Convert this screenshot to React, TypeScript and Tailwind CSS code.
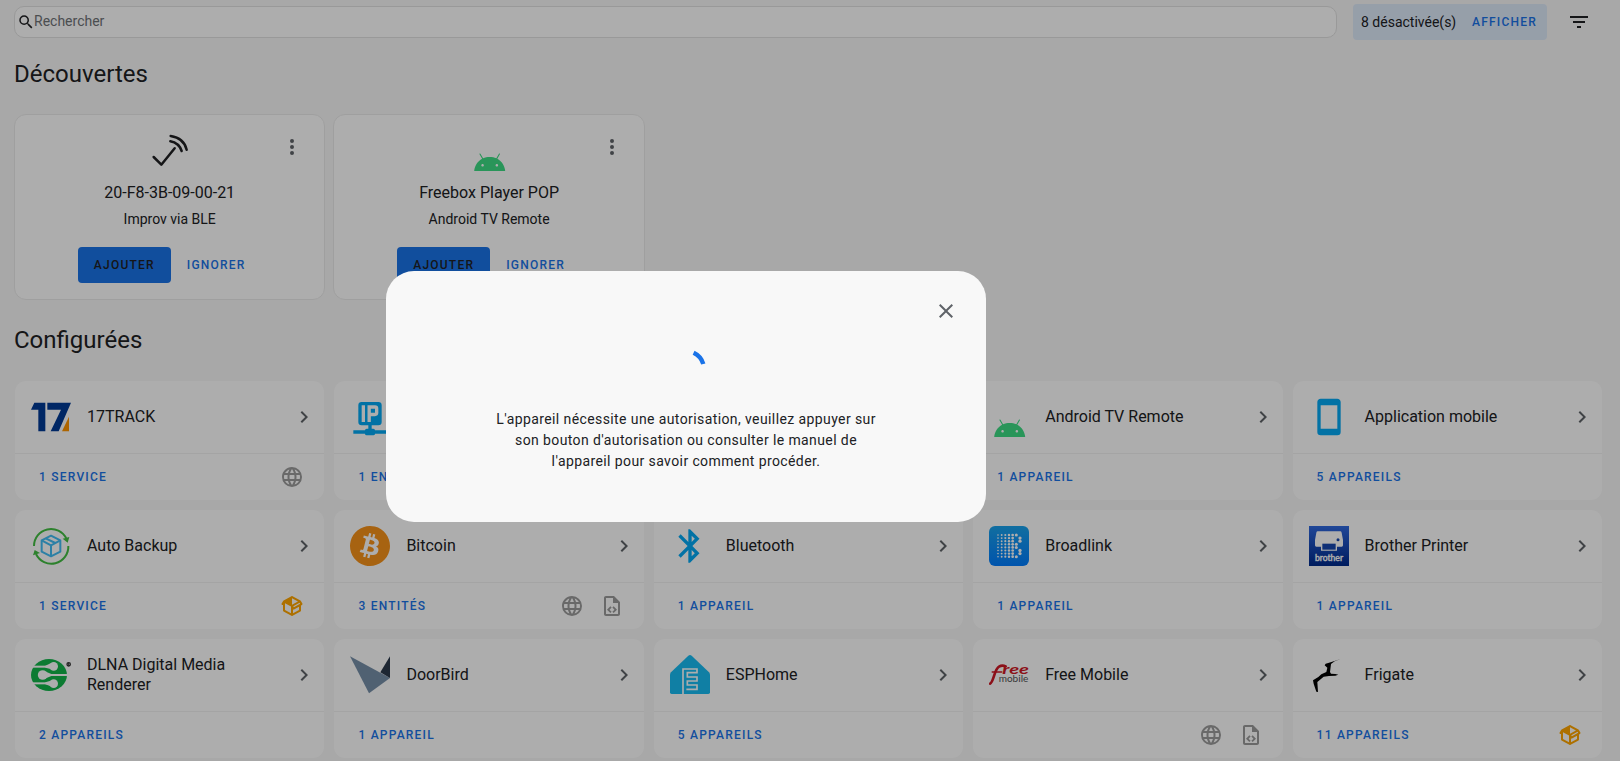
import React from "react";
import { SiBitcoin } from "react-icons/si";

const P = {
  magnify:
    "M9.5,3A6.5,6.5 0 0,1 16,9.5C16,11.11 15.41,12.59 14.44,13.73L14.71,14H15.5L20.5,19L19,20.5L14,15.5V14.71L13.73,14.44C12.59,15.41 11.11,16 9.5,16A6.5,6.5 0 0,1 3,9.5A6.5,6.5 0 0,1 9.5,3M9.5,5C7,5 5,7 5,9.5C5,12 7,14 9.5,14C12,14 14,12 14,9.5C14,7 12,5 9.5,5Z",
  filter: "M6,13H18V11H6M3,6V8H21V6M10,18H14V16H10V18Z",
  dots: "M12,16A2,2 0 0,1 14,18A2,2 0 0,1 12,20A2,2 0 0,1 10,18A2,2 0 0,1 12,16M12,10A2,2 0 0,1 14,12A2,2 0 0,1 12,14A2,2 0 0,1 10,12A2,2 0 0,1 12,10M12,4A2,2 0 0,1 14,6A2,2 0 0,1 12,8A2,2 0 0,1 10,6A2,2 0 0,1 12,4Z",
  chevron: "M8.59,16.58L13.17,12L8.59,7.41L10,6L16,12L10,18L8.59,16.58Z",
  close:
    "M19,6.41L17.59,5L12,10.59L6.41,5L5,6.41L10.59,12L5,17.59L6.41,19L12,13.41L17.59,19L19,17.59L13.41,12L19,6.41Z",
  web: "M16.36,14C16.44,13.34 16.5,12.68 16.5,12C16.5,11.32 16.44,10.66 16.36,10H19.74C19.9,10.64 20,11.31 20,12C20,12.69 19.9,13.36 19.74,14M14.59,19.56C15.19,18.45 15.65,17.25 15.97,16H18.92C17.96,17.65 16.43,18.93 14.59,19.56M14.34,14H9.66C9.56,13.34 9.5,12.68 9.5,12C9.5,11.32 9.56,10.65 9.66,10H14.34C14.43,10.65 14.5,11.32 14.5,12C14.5,12.68 14.43,13.34 14.34,14M12,19.96C11.17,18.76 10.5,17.43 10.09,16H13.91C13.5,17.43 12.83,18.76 12,19.96M8,8H5.08C6.03,6.34 7.57,5.06 9.4,4.44C8.8,5.55 8.35,6.75 8,8M5.08,16H8C8.35,17.25 8.8,18.45 9.4,19.56C7.57,18.93 6.03,17.65 5.08,16M4.26,14C4.1,13.36 4,12.69 4,12C4,11.31 4.1,10.64 4.26,10H7.64C7.56,10.66 7.5,11.32 7.5,12C7.5,12.68 7.56,13.34 7.64,14M12,4.03C12.83,5.23 13.5,6.57 13.91,8H10.09C10.5,6.57 11.17,5.23 12,4.03M18.92,8H15.97C15.65,6.75 15.19,5.55 14.59,4.44C16.43,5.07 17.96,6.34 18.92,8M12,2C6.47,2 2,6.5 2,12A10,10 0 0,0 12,22A10,10 0 0,0 22,12A10,10 0 0,0 12,2Z",
  yaml: "M14 2H6C4.89 2 4 2.9 4 4V20C4 21.11 4.89 22 6 22H18C19.11 22 20 21.11 20 20V8L14 2M18 20H6V4H13V9H18V20M9.54 15.65L11.63 17.74L10.35 19L7 15.65L10.35 12.3L11.63 13.56L9.54 15.65M17 15.65L13.65 19L12.38 17.74L14.47 15.65L12.38 13.56L13.65 12.3L17 15.65Z",
  box: "M2,10.96C1.5,10.68 1.35,10.07 1.63,9.59L3.13,7C3.24,6.8 3.41,6.66 3.6,6.58L11.43,2.18C11.59,2.06 11.79,2 12,2C12.21,2 12.41,2.06 12.57,2.18L20.47,6.62C20.66,6.72 20.82,6.88 20.91,7.08L22.36,9.6C22.64,10.08 22.47,10.69 22,10.96L21,11.54V16.5C21,16.88 20.79,17.21 20.47,17.38L12.57,21.82C12.41,21.94 12.21,22 12,22C11.79,22 11.59,21.94 11.43,21.82L3.53,17.38C3.21,17.21 3,16.88 3,16.5V10.96C2.7,11.13 2.32,11.14 2,10.96M12,4.15V4.15L12,10.85V10.85L17.96,7.5L12,4.15M5,15.91L11,19.29V12.58L5,9.21V15.91M19,15.91V12.69L14,15.59C13.67,15.77 13.3,15.76 13,15.6V19.29L19,15.91M13.85,13.36L20.13,9.73L19.55,8.72L13.27,12.35L13.85,13.36Z",
  cellphone:
    "M17,19H7V5H17M17,1H7C5.89,1 5,1.89 5,3V21A2,2 0 0,0 7,23H17A2,2 0 0,0 19,21V3C19,1.89 18.1,1 17,1Z",
  bluetooth:
    "M14.88,16.29L13,18.17V14.41M13,5.83L14.88,7.71L13,9.58M17.71,7.71L12,2H11V9.58L6.41,5L5,6.41L10.59,12L5,17.59L6.41,19L11,14.41V22H12L17.71,16.29L13.41,12L17.71,7.71Z",
  ipNetwork:
    "M17,3A2,2 0 0,1 19,5V15A2,2 0 0,1 17,17H13V19H14A1,1 0 0,1 15,20H22V22H15A1,1 0 0,1 14,23H10A1,1 0 0,1 9,22H2V20H9A1,1 0 0,1 10,19H11V17H7A2,2 0 0,1 5,15V5A2,2 0 0,1 7,3H17M7,5V15H9V5H7M10.5,5V15H12.5V11.5H15A2,2 0 0,0 17,9.5V7A2,2 0 0,0 15,5H10.5M12.5,7H15V9.5H12.5V7Z",
  android:
    "M17.523 15.3414c-.5511 0-.9993-.4486-.9993-.9997s.4483-.9993.9993-.9993c.5511 0 .9993.4483.9993.9993.0001.5511-.4482.9997-.9993.9997m-11.046 0c-.5511 0-.9993-.4486-.9993-.9997s.4482-.9993.9993-.9993c.5511 0 .9993.4483.9993.9993 0 .5511-.4483.9997-.9993.9997m11.4045-6.02l1.9973-3.4592a.416.416 0 00-.1521-.5676.416.416 0 00-.5676.1521l-2.0223 3.503C15.5902 8.2439 13.8533 7.8508 12 7.8508s-3.5902.3931-5.1367 1.0989L4.841 5.4467a.4161.4161 0 00-.5677-.1521.4157.4157 0 00-.1521.5676l1.9973 3.4592C2.6889 11.1867.3432 14.6589 0 18.761h24c-.3435-4.1021-2.6892-7.5743-6.1185-9.4396",
};

function Icon({ d, className = "size-6" }: { d: string; className?: string }) {
  return (
    <svg viewBox="0 0 24 24" className={`shrink-0 ${className}`} fill="currentColor" fillRule="evenodd">
      <path d={d} />
    </svg>
  );
}

function Logo({ box = "0 0 120 120", children }: { box?: string; children: React.ReactNode }) {
  return (
    <svg viewBox={box} className="size-10 shrink-0" fill="none">
      {children}
    </svg>
  );
}

const AndroidLogo = () => (
  <Logo box="0 0 40 40">
    <path d={P.android} fill="#3ddc84" transform="translate(5.2 15.76) scale(1.292)" />
  </Logo>
);

const ImprovLogo = () => (
  <Logo>
    <g stroke="#1f2023" strokeWidth="7.5" strokeLinecap="round" strokeLinejoin="round">
      <path d="M11 78L34 101L74 52" />
      <path d="M61 31C77 34 90 45 95 60" />
      <path d="M62 15C88 19 105 35 110 56" />
    </g>
  </Logo>
);

const Track17Logo = () => (
  <Logo box="93 81 120 120">
    <path d="M93 119L103 98H136V184H115V119Z" fill="#003a96" />
    <path d="M142 98H213L176 184H152L183 119H142Z" fill="#003a96" />
    <path d="M207 140V184H186Z" fill="#ff9500" />
  </Logo>
);

const AutoBackupLogo = () => (
  <Logo box="93 468 120 120">
    <g stroke="#43bf43" strokeWidth="6">
      <path d="M102 528A51 51 0 0 1 199 506" />
      <path d="M205 528A51 51 0 0 1 108 552" />
    </g>
    <path d="M188 506L208 501L203 518Z M99 556L104 540L120 549Z" fill="#43bf43" />
    <g stroke="#41bdf5" strokeWidth="6" strokeLinejoin="round">
      <path d="M153 497L181 511V545L153 559L125 545V511Z" />
      <path d="M125 511L153 526L181 511M153 526V559M137 505L166 519" />
    </g>
  </Logo>
);

const DlnaLogo = () => (
  <Logo box="93 855 120 120">
    <ellipse cx="147" cy="915" rx="54" ry="48" fill="#12b64b" />
    <g stroke="#fff" strokeWidth="6">
      <path d="M98 890H150" />
      <path d="M98 940H150" />
      <path d="M134 915H204" />
    </g>
    <g fill="#fff">
      <path d="M136 887L152 880V897L136 893Z M136 937L152 932V949L136 943Z M154 912L138 905V925L154 918Z" />
      <circle cx="161" cy="889" r="13" />
      <circle cx="161" cy="941" r="13" />
      <circle cx="128" cy="915" r="14.5" />
    </g>
    <circle cx="206" cy="883" r="5" stroke="#333" strokeWidth="4" />
    <path d="M206 879V887" stroke="#333" strokeWidth="3" />
  </Logo>
);

const DoorBirdLogo = () => (
  <Logo box="60 465 120 120">
    <path d="M60 469L180 534L117 580Z" fill="#7790a9" />
    <path d="M180 469V534L151 517Z" fill="#2c394b" />
  </Logo>
);

const EspHomeLogo = () => (
  <Logo box="90 465 120 120">
    <path
      d="M145 467Q150 463 155 467L207 517Q210 520 210 525V577Q210 582 205 582H95Q90 582 90 577V525Q90 520 93 517Z"
      fill="#18bcf2"
    />
    <path
      d="M129 582V507H171V518H142V531H171V543H142V555H171V568H139"
      stroke="#fff"
      strokeWidth="5"
    />
  </Logo>
);

const BROADLINK_DOTS = [
  "1111110",
  "1111101",
  "1111101",
  "1111110",
  "1111110",
  "1111101",
  "1111101",
  "1111110",
];
const BroadlinkLogo = () => (
  <Logo>
    <defs>
      <linearGradient id="broadlink" x1="0" y1="0" x2="0" y2="1">
        <stop offset="0" stopColor="#1aa3ec" />
        <stop offset="1" stopColor="#007cff" />
      </linearGradient>
    </defs>
    <rect width="120" height="120" rx="18" fill="url(#broadlink)" />
    {BROADLINK_DOTS.map((cells, row) =>
      cells
        .split("")
        .map((on, col) =>
          on === "1" ? (
            <circle key={`${row}-${col}`} cx={27 + col * 11} cy={27 + row * 9.3} r={2.4 + col * 0.42} fill="#fff" />
          ) : null,
        ),
    )}
  </Logo>
);

const BrotherLogo = () => (
  <Logo>
    <defs>
      <linearGradient id="brother" x1="0" y1="0" x2="0" y2="1">
        <stop offset="0" stopColor="#3069e0" />
        <stop offset="1" stopColor="#002a8c" />
      </linearGradient>
    </defs>
    <rect width="120" height="120" fill="url(#brother)" />
    <path
      d="M26 16H94Q97 16 98 20L102 42V58Q102 62 98 62H84V74H36V62H22Q18 62 18 58V42L22 20Q23 16 26 16Z"
      fill="#fff"
    />
    <rect x="40" y="53" width="40" height="18" fill="#1546ae" />
    <circle cx="87" cy="41" r="4.5" fill="#1546ae" />
    <text
      x="18"
      y="106"
      textLength="84"
      lengthAdjust="spacingAndGlyphs"
      fontSize="26"
      fontWeight="400"
      fill="#fff"
      stroke="#fff"
      strokeWidth="1.2"
      className="font-['Lato',sans-serif]"
    >
      brother
    </text>
  </Logo>
);

const FreeLogo = () => (
  <Logo>
    <g fill="none" stroke="#cf1826" strokeLinecap="round">
      <path d="M3 86C14 82 16 42 30 35C36 31 44 31 50 34" strokeWidth="8" />
      <path d="M10 51H38" strokeWidth="5" />
    </g>
    <text
      x="40"
      y="57"
      textLength="80"
      lengthAdjust="spacingAndGlyphs"
      fontSize="39"
      fontWeight="700"
      fontStyle="italic"
      fill="#cf1826"
      className="font-['Lato',sans-serif]"
    >
      ree
    </text>
    <text
      x="29"
      y="82"
      textLength="89"
      lengthAdjust="spacingAndGlyphs"
      fontSize="27"
      fill="#555"
      className="font-['Lato',sans-serif]"
    >
      mobile
    </text>
  </Logo>
);

const FrigateLogo = () => (
  <Logo box="87 855 120 120">
    <path
      d="M182 867L152 877L137 881L134 886L142 893L139 906L124 913L115 921L99 931L101 941L109 965L114 966L112 936L131 920L147 918L166 917L175 914L166 912L153 911L150 906L153 882L164 874Z"
      fill="#000"
    />
  </Logo>
);

const BlueIcon = ({ d }: { d: string }) => <Icon d={d} className="size-10 text-[#03a9f4]" />;

type Badge = "web" | "yaml" | "box";
type Entry = { name: string; count?: string; logo: React.ReactNode; badges?: Badge[] };

const ENTRIES: Entry[] = [
  { name: "17TRACK", count: "1 service", logo: <Track17Logo />, badges: ["web"] },
  { name: "", count: "1 entité", logo: <BlueIcon d={P.ipNetwork} /> },
  { name: "", logo: null },
  { name: "Android TV Remote", count: "1 appareil", logo: <AndroidLogo /> },
  { name: "Application mobile", count: "5 appareils", logo: <BlueIcon d={P.cellphone} /> },
  { name: "Auto Backup", count: "1 service", logo: <AutoBackupLogo />, badges: ["box"] },
  {
    name: "Bitcoin",
    count: "3 entités",
    logo: <SiBitcoin className="size-10 shrink-0 text-[#f7931a]" />,
    badges: ["web", "yaml"],
  },
  { name: "Bluetooth", count: "1 appareil", logo: <BlueIcon d={P.bluetooth} /> },
  { name: "Broadlink", count: "1 appareil", logo: <BroadlinkLogo /> },
  { name: "Brother Printer", count: "1 appareil", logo: <BrotherLogo /> },
  { name: "DLNA Digital Media Renderer", count: "2 appareils", logo: <DlnaLogo /> },
  { name: "DoorBird", count: "1 appareil", logo: <DoorBirdLogo /> },
  { name: "ESPHome", count: "5 appareils", logo: <EspHomeLogo /> },
  { name: "Free Mobile", logo: <FreeLogo />, badges: ["web", "yaml"] },
  { name: "Frigate", count: "11 appareils", logo: <FrigateLogo />, badges: ["box"] },
];

const LABEL = "text-xs leading-9 font-medium tracking-[1.22px] uppercase";

function DiscoveredCard({ name, domain, logo }: { name: string; domain: string; logo: React.ReactNode }) {
  return (
    <div className="relative flex h-[186px] flex-col items-center rounded-xl border border-[#ebebeb] bg-white pt-4">
      <button className="absolute top-5 right-5 text-[#5f6368]">
        <Icon d={P.dots} />
      </button>
      {logo}
      <div className="mt-2.5 text-base leading-6">{name}</div>
      <div className="mt-1 text-sm leading-5">{domain}</div>
      <div className="mt-[18px] flex">
        <button className={`rounded bg-[#1a73e8] px-4 ${LABEL}`}>Ajouter</button>
        <button className={`px-4 text-[#1a73e8] ${LABEL}`}>Ignorer</button>
      </div>
    </div>
  );
}

function IntegrationCard({ name, count, logo, badges = [] }: Entry) {
  return (
    <div className="flex h-[121px] flex-col rounded-xl border border-transparent bg-white bg-clip-padding">
      <div className="flex h-[72px] items-center pr-2 pl-4">
        {logo}
        <div className="ml-4 flex-1 text-base leading-5">{name}</div>
        <Icon d={P.chevron} className="size-6 text-[#5f6368]" />
      </div>
      <div className="flex flex-1 items-center justify-between border-t border-[#f2f2f2] pr-5 pl-6">
        <div className={`text-[#1a73e8] ${LABEL}`}>{count}</div>
        <div className="flex gap-4">
          {badges.map((b) => (
            <Icon key={b} d={P[b]} className={b === "box" ? "size-6 text-[#ffa600]" : "size-6 text-[#9b9b9b]"} />
          ))}
        </div>
      </div>
    </div>
  );
}

export default function App() {
  return (
    <div className="relative h-screen overflow-hidden bg-[#f8f8f8] font-['Roboto',sans-serif] text-[#202124]">
      <div className="pr-[17px] pl-3.5">
        <div className="flex h-11 items-center pr-3">
          <div className="flex h-8 flex-1 items-center rounded-[10px] border border-[#e2e2e2] bg-white pl-0.5">
            <Icon d={P.magnify} className="size-[18px]" />
            <span className="-ml-px pb-0.5 text-sm text-[#6f7377]">Rechercher</span>
          </div>
          <div className="ml-4 flex h-9 w-[194px] items-center justify-between rounded bg-[#deeafa] pr-2.5 pl-2">
            <span className="text-sm">8 désactivée(s)</span>
            <button className={`text-[#1a73e8] ${LABEL}`}>Afficher</button>
          </div>
          <Icon d={P.filter} className="ml-5 size-6" />
        </div>
        <h1 className="mt-[14px] text-2xl leading-8">Découvertes</h1>
        <div className="mt-6 grid grid-cols-5 gap-2">
          <DiscoveredCard name="20-F8-3B-09-00-21" domain="Improv via BLE" logo={<ImprovLogo />} />
          <DiscoveredCard name="Freebox Player POP" domain="Android TV Remote" logo={<AndroidLogo />} />
        </div>
        <h1 className="mt-6 text-2xl leading-8">Configurées</h1>
        <div className="mt-6 grid grid-cols-5 gap-2">
          {ENTRIES.map((e, i) => (
            <IntegrationCard key={i} {...e} />
          ))}
        </div>
      </div>

      <div className="absolute inset-0 bg-black/32" />
      <div className="absolute top-[271px] left-[386px] flex h-[251px] w-[600px] flex-col items-center rounded-[28px] bg-[#f8f8f8] px-7 pt-7">
        <button className="self-end text-[#5f6368]">
          <Icon d={P.close} />
        </button>
        <svg viewBox="0 0 48 48" className="mt-[22px] size-12" fill="none">
          <path d="M31.6 7.7A18 18 0 0 1 41.3 19" stroke="#1a73e8" strokeWidth="4.4" />
        </svg>
        <p className="mt-4 text-center text-sm leading-[21px] tracking-[0.4px]">
          L'appareil nécessite une autorisation, veuillez appuyer sur
          <br />
          son bouton d'autorisation ou consulter le manuel de
          <br />
          l'appareil pour savoir comment procéder.
        </p>
      </div>
    </div>
  );
}
